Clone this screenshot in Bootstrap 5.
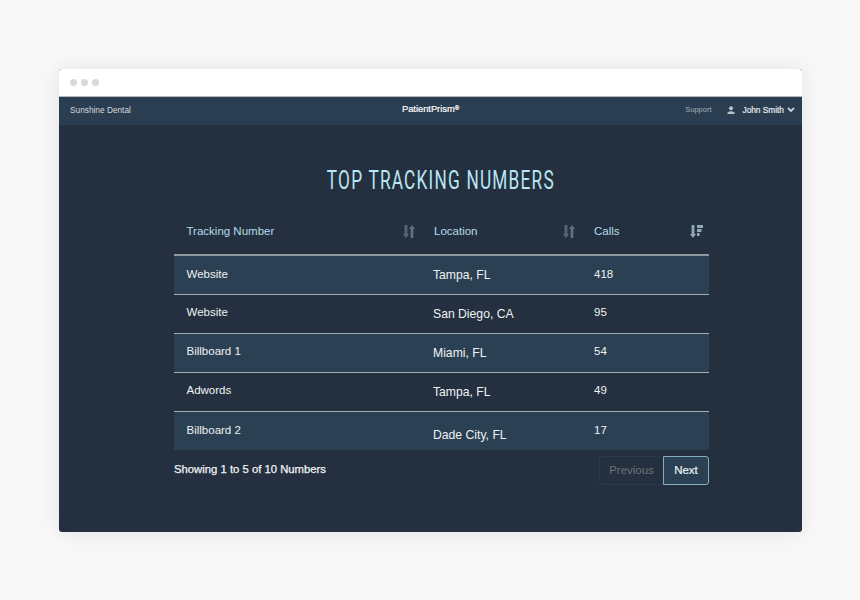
<!doctype html>
<html lang="en">
<head>
<meta charset="utf-8">
<title>Top Tracking Numbers</title>
<link rel="stylesheet" href="https://cdn.jsdelivr.net/npm/bootstrap@5.3.0/dist/css/bootstrap.min.css">
<style>
html, body { height: 100%; }
body { background: #f8f8f8; font-family: "Liberation Sans", Arial, sans-serif; padding: 69px 58px 68px 59px; overflow: hidden; }
.app-window { height: 463px; background: #24303f; border-radius: 3px; box-shadow: 0 0 22px rgba(0,0,0,.09); overflow: hidden; }
.chrome-bar { height: 28px; background: #fff; border-bottom: 1px solid #b5b9bc; padding-left: 11px; gap: 4px; }
.chrome-dot { width: 7px; height: 7px; border-radius: 50%; background: #d8d9da; }
.top-bar { height: 28px; background: #2b3d51; padding: 0 7px 2px 11px; font-size: 8.3px; color: #d6dadd; }
.top-side { flex: 1 1 0; }
.brand-name { color: #fff; font-size: 9.3px; -webkit-text-stroke: .2px #fff; margin-right: 4px; }
.brand-name sup { font-size: 6px; top: -.3em; }
.support-link { color: #a5afb8; font-size: 7.5px; margin-right: 16px; }
.user-name { color: #e6e9eb; font-size: 8.3px; margin: 0 3px 0 7px; -webkit-text-stroke: .2px #e6e9eb; }
.page-title { font-family: Roboto, sans-serif; font-weight: 400; color: #b9e6f3; font-size: 25px; letter-spacing: 1.75px; line-height: 30px; margin: 41px 0 13px; padding-left: 30px; text-align: center; white-space: nowrap; transform: scaleX(.69); }
.numbers-wrap { width: 535px; margin-left: 115px; }
.numbers-table { --bs-table-bg: transparent; --bs-table-color: #eef2f4; --bs-table-border-color: #a5adb3; table-layout: fixed; margin: 0; font-size: 11.5px; }
.numbers-table th { height: 46px; padding: 0 12.5px; font-weight: 400; color: #b4dde9; border-bottom: 2px solid #8f979e; vertical-align: middle; font-size: 11.5px; }
.numbers-table td { height: 39px; padding: 0 12.5px 1px; vertical-align: middle; background: transparent; color: #eef2f4; border-bottom: 1px solid #a5adb3; }
.numbers-table tbody tr:nth-child(odd) td { background: #2c4053; }
.numbers-table tbody tr:last-child td { border-bottom: 0; }
.numbers-table .place-cell { font-size: 12.2px; padding: 1px 0 0 11.5px; }
.numbers-table .low-cell { padding-top: 8px; }
.sort-icon { display: block; margin-right: -6px; }
.footer-row { margin-top: 6px; }
.showing-text { color: #f1f3f5; font-size: 11.3px; margin-top: 5px; -webkit-text-stroke: .25px #f1f3f5; }
.pager { --bs-pagination-bg: transparent; --bs-pagination-border-color: #2b3a4a; --bs-pagination-font-size: 11.5px; --bs-pagination-padding-x: 12px; --bs-pagination-padding-y: 0; --bs-pagination-border-radius: 3px; margin: 0; }
.pager .page-link { line-height: 27px; box-shadow: none; }
.pager .off-link { color: #6b7278; background: transparent; border-color: #2b3a4a; padding: 0; width: 65px; text-align: center; }
.pager .on-link { color: #e8f3f6; background: #2c4053; border: 1px solid #86aebb; margin-left: 0; width: 46px; padding: 0; text-align: center; -webkit-text-stroke: .2px #e8f3f6; }
</style>
</head>
<body>
<div class="app-window">
  <div class="chrome-bar d-flex align-items-center">
    <span class="chrome-dot"></span><span class="chrome-dot"></span><span class="chrome-dot"></span>
  </div>
  <nav class="top-bar d-flex align-items-center">
    <div class="top-side">Sunshine Dental</div>
    <div class="brand-name">PatientPrism<sup>®</sup></div>
    <div class="top-side d-flex align-items-center justify-content-end">
      <span class="support-link">Support</span>
      <svg width="8" height="8" viewBox="0 0 8 8" fill="#b9c2c9"><circle cx="4" cy="2.3" r="2"/><path d="M0.5 8V6.6L3 5.3h2L7.5 6.6V8z"/></svg>
      <span class="user-name">John Smith</span>
      <svg width="8" height="6" viewBox="0 0 8 6" fill="none" stroke="#c9d0d5" stroke-width="1.8"><path d="M1 1l3 3 3-3"/></svg>
    </div>
  </nav>
  <h1 class="page-title">TOP TRACKING NUMBERS</h1>
  <div class="numbers-wrap">
    <table class="table numbers-table">
      <colgroup><col style="width:247.5px"><col style="width:160px"><col style="width:127.5px"></colgroup>
      <thead>
        <tr>
          <th><div class="d-flex justify-content-between align-items-center">Tracking Number
            <svg class="sort-icon" width="12" height="13" viewBox="0 0 12 13" fill="#546676"><path d="M1.6 0h2.8v9H6l-3 4-3-4h1.6z"/><path d="M7.6 13h2.8V4H12L9 0 6 4h1.6z" fill="#5f7282"/></svg></div></th>
          <th><div class="d-flex justify-content-between align-items-center">Location
            <svg class="sort-icon" width="12" height="13" viewBox="0 0 12 13" fill="#546676"><path d="M1.6 0h2.8v9H6l-3 4-3-4h1.6z"/><path d="M7.6 13h2.8V4H12L9 0 6 4h1.6z" fill="#5f7282"/></svg></div></th>
          <th><div class="d-flex justify-content-between align-items-center">Calls
            <svg class="sort-icon" width="13" height="13" viewBox="0 0 13 13" fill="#90a8b7"><path d="M1.6 0h2.8v9H6l-3 4-3-4h1.6z"/><path d="M7 0h6v3H7zM7 4h4.5v3H7zM7 8h2.5v3H7z"/></svg></div></th>
        </tr>
      </thead>
      <tbody>
        <tr><td>Website</td><td class="place-cell">Tampa, FL</td><td>418</td></tr>
        <tr><td>Website</td><td class="place-cell">San Diego, CA</td><td>95</td></tr>
        <tr><td>Billboard 1</td><td class="place-cell">Miami, FL</td><td>54</td></tr>
        <tr><td>Adwords</td><td class="place-cell">Tampa, FL</td><td>49</td></tr>
        <tr><td>Billboard 2</td><td class="place-cell low-cell">Dade City, FL</td><td>17</td></tr>
      </tbody>
    </table>
    <div class="footer-row d-flex justify-content-between align-items-start">
      <div class="showing-text">Showing 1 to 5 of 10 Numbers</div>
      <ul class="pagination pager">
        <li class="page-item"><a class="page-link off-link" href="#">Previous</a></li>
        <li class="page-item"><a class="page-link on-link" href="#">Next</a></li>
      </ul>
    </div>
  </div>
</div>
<script src="https://cdn.jsdelivr.net/npm/bootstrap@5.3.0/dist/js/bootstrap.bundle.min.js"></script>
</body>
</html>
